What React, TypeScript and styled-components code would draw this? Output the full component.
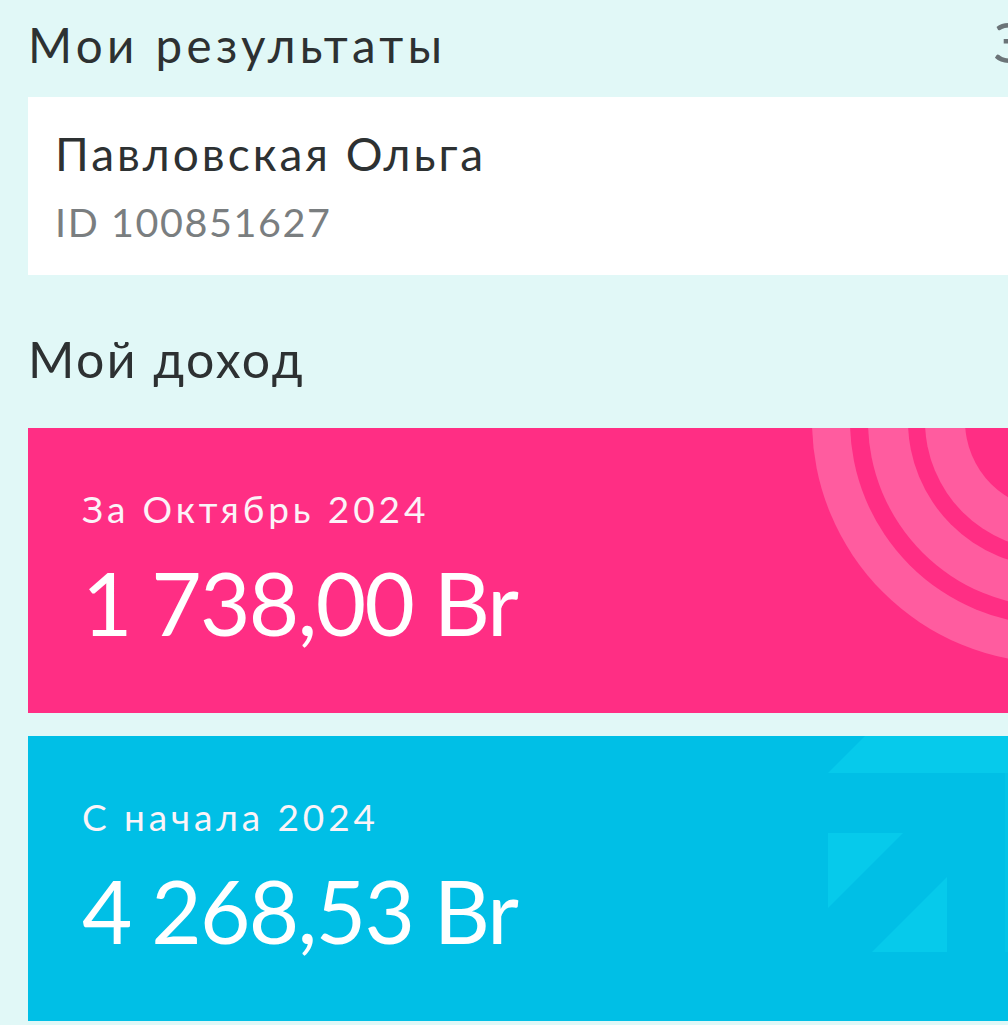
import React from "react";
import styled, { createGlobalStyle } from "styled-components";

const GlobalStyle = createGlobalStyle`
  html, body {
    margin: 0;
    padding: 0;
    background: #e1f8f7;
    overflow: hidden;
  }
  body {
    font-family: Lato, "Noto Sans", "Liberation Sans", sans-serif;
    -webkit-font-smoothing: antialiased;
  }
`;

const Page = styled.div`
  width: 1008px;
  height: 1025px;
  box-sizing: border-box;
  padding-left: 28px;
  overflow: hidden;
  display: flex;
  flex-direction: column;
`;

const Header = styled.header`
  height: 97px;
  display: flex;
  align-items: flex-start;
  justify-content: space-between;
  overflow: hidden;
`;

const Title = styled.h1`
  margin: 16px 0 0 0;
  font-size: 47.5px;
  line-height: 1.2;
  font-weight: 400;
  letter-spacing: 4.4px;
  color: #2d3132;
  white-space: nowrap;
`;

const HeaderAction = styled.span`
  margin: 14px -18px 0 0;
  font-size: 56px;
  line-height: 56px;
  color: #6b7478;
`;

const ProfileCard = styled.section`
  height: 178px;
  box-sizing: border-box;
  background: #ffffff;
  padding: 29px 0 0 27px;
  display: flex;
  flex-direction: column;
`;

const Name = styled.div`
  font-size: 46px;
  line-height: 1.2;
  letter-spacing: 3px;
  color: #2d3132;
  white-space: nowrap;
`;

const UserId = styled.div`
  margin-top: 17px;
  font-size: 39.5px;
  line-height: 1.2;
  letter-spacing: 1.6px;
  color: #7a7e80;
`;

const SectionTitle = styled.h2`
  margin: 54px 0 39px 0;
  font-size: 50px;
  line-height: 60px;
  font-weight: 400;
  letter-spacing: 2.4px;
  color: #2d3132;
`;

const CardList = styled.div`
  display: flex;
  flex-direction: column;
  gap: 23px;
`;

const IncomeCard = styled.div<{ $tone: "pink" | "blue" }>`
  position: relative;
  height: 285px;
  box-sizing: border-box;
  overflow: hidden;
  background: ${(p) => (p.$tone === "pink" ? "#ff2e84" : "#00bfe6")};
  padding: 60px 0 0 54px;
  color: #ffffff;
`;

const Deco = styled.svg`
  position: absolute;
  top: 0;
  left: 0;
  width: 980px;
  height: 285px;
  pointer-events: none;
`;

const CardText = styled.div`
  position: relative;
  display: flex;
  flex-direction: column;
`;

const Period = styled.div`
  font-size: 37px;
  line-height: 42px;
  letter-spacing: 3.9px;
  color: #fbf3f8;
  white-space: nowrap;
`;

const Amount = styled.div`
  margin-top: 21px;
  font-size: 87px;
  line-height: 1.2;
  letter-spacing: -1.7px;
  color: #ffffff;
  white-space: nowrap;
`;

const PinkRings = () => (
  <Deco viewBox="0 0 980 285">
    <circle cx={1026} cy={-7} r={242} fill="#ff5c9f" />
    <circle cx={1026} cy={-7} r={204} fill="#ff2e84" />
    <circle cx={1026} cy={-7} r={186} fill="#ff5c9f" />
    <circle cx={1026} cy={-7} r={146} fill="#ff2e84" />
    <circle cx={1026} cy={-7} r={129} fill="#ff5c9f" />
    <circle cx={1026} cy={-7} r={89} fill="#ff2e84" />
  </Deco>
);

const BlueShapes = () => (
  <Deco viewBox="0 0 980 285">
    <polygon points="800,37 837,0 980,0 980,37" fill="#06caeb" />
    <polygon points="800,97 875,97 800,172" fill="#06caeb" />
    <polygon points="919,141 919,216 844,216" fill="#06caeb" />
    <rect x={977} y={37} width={3} height={179} fill="#03c4e8" />
  </Deco>
);

export default function App() {
  return (
    <>
      <GlobalStyle />
      <Page>
        <Header>
          <Title>Мои результаты</Title>
          <HeaderAction>З</HeaderAction>
        </Header>
        <ProfileCard>
          <Name>Павловская Ольга</Name>
          <UserId>ID 100851627</UserId>
        </ProfileCard>
        <SectionTitle>Мой доход</SectionTitle>
        <CardList>
          <IncomeCard $tone="pink">
            <PinkRings />
            <CardText>
              <Period>За Октябрь 2024</Period>
              <Amount>1 738,00 Br</Amount>
            </CardText>
          </IncomeCard>
          <IncomeCard $tone="blue">
            <BlueShapes />
            <CardText>
              <Period>С начала 2024</Period>
              <Amount>4 268,53 Br</Amount>
            </CardText>
          </IncomeCard>
        </CardList>
      </Page>
    </>
  );
}
